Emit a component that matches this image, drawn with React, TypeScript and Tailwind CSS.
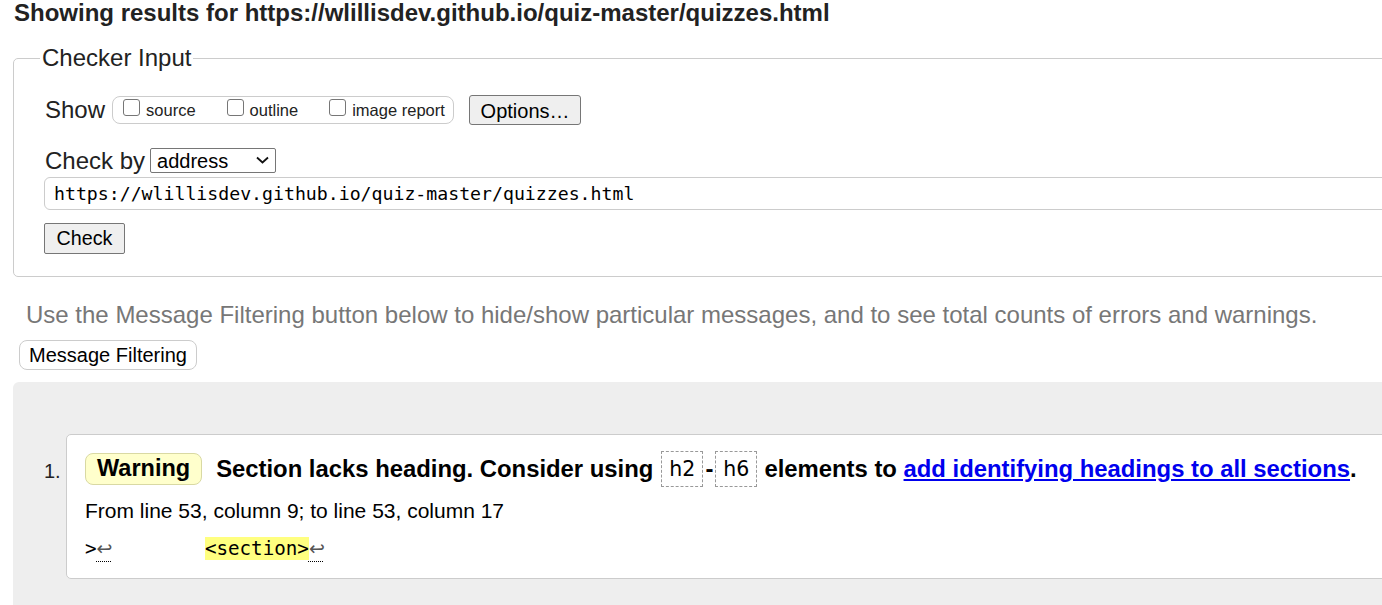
import React from "react";

const sans = "font-['Liberation_Sans',Arial,sans-serif]";
const mono = "font-['DejaVu_Sans_Mono','Liberation_Mono',monospace]";

function Box({ label }: { label: string }) {
  return (
    <label className="flex items-center">
      <span className="w-[17px] h-[17px] border border-[#767676] rounded-[3px] bg-white mr-[6px] mt-[-5px]" />
      <span className="text-[16.5px] text-[#222]">{label}</span>
    </label>
  );
}

function Ret() {
  return (
    <span className="font-['DejaVu_Sans',sans-serif] text-[19px] text-[#555] underline decoration-dotted decoration-[#000] decoration-1 underline-offset-[6px]">
      ↩
    </span>
  );
}

export default function App() {
  return (
    <div className={`w-full h-[605px] overflow-hidden bg-white text-black ${sans}`}>
      <div className="w-[1520px]">
        <h1 className="pl-[14px] -mt-[1px] text-[24px] leading-[28px] font-bold text-[#222]">
          Showing results for https://wlillisdev.github.io/quiz-master/quizzes.html
        </h1>

        <fieldset className="ml-[13px] mt-[17px] border border-[#ccc] rounded-[5px] pb-[22px]">
          <legend className="ml-[26px] px-[2px] text-[24px] leading-[28px] text-[#222]">
            Checker Input
          </legend>

          <div className="pl-[31px]">
            <div className="flex items-center mt-[23px] h-[30px]">
              <span className="text-[24px] text-[#222] mr-[7px]">Show</span>
              <div className="flex items-center h-[28px] w-[342px] border border-[#ccc] rounded-[8px] pl-[10px] gap-[31px]">
                <Box label="source" />
                <Box label="outline" />
                <Box label="image report" />
              </div>
              <button className="ml-[15px] w-[112px] h-[30px] bg-[#efefef] border border-[#767676] rounded-[3px] text-[20px] text-black">
                Options…
              </button>
            </div>

            <div className="flex items-center mt-[23px] h-[25px]">
              <span className="text-[24px] text-[#222] mr-[5px]">Check by</span>
              <div className="relative w-[126px] h-[25px] border border-[#767676] rounded-[2px] bg-white flex items-center pl-[6px]">
                <span className="text-[20px] text-black">address</span>
                <svg className="absolute right-[6px] top-[7px]" width="13" height="8" viewBox="0 0 13 8">
                  <path d="M1 1.5 L6.5 6.5 L12 1.5" fill="none" stroke="#111" strokeWidth="1.8" />
                </svg>
              </div>
            </div>

            <div className="mt-[4px] -ml-[1px] h-[33px] border border-[#ccc] rounded-[6px] flex items-center pl-[9px]">
              <span className={`${mono} text-[18.2px] text-black`}>
                https://wlillisdev.github.io/quiz-master/quizzes.html
              </span>
            </div>

            <button className="mt-[13px] -ml-[1px] w-[81px] h-[31px] bg-[#efefef] border border-[#767676] rounded-[2px] text-[19.7px] text-black block">
              Check
            </button>
          </div>
        </fieldset>

        <p className="pl-[26px] mt-[24px] text-[24px] leading-[28px] text-[#777]">
          Use the Message Filtering button below to hide/show particular messages, and to see total counts of errors and warnings.
        </p>

        <button className="ml-[19px] mt-[11px] w-[178px] h-[30px] bg-white border border-[#ccc] rounded-[8px] text-[20px] leading-[24px] text-black block">
          Message Filtering
        </button>

        <div className="ml-[13px] mt-[12px] bg-[#eeeeee] rounded-tl-[6px] pt-[52px] pl-[53px] h-[300px]">
          <div className="relative border border-[#ccc] rounded-[5px] bg-white pl-[18px] pt-[16px] h-[145px]">
            <span className="absolute left-[-23px] top-[21px] text-[20px] text-[#222]">1.</span>

            <div className="flex items-center h-[36px]">
              <span className="h-[32px] px-[11px] flex items-center bg-[#ffffcc] border border-[#d9d9a3] rounded-[8px] text-[23.5px] font-bold text-black">
                Warning
              </span>
              <span className="ml-[14px] text-[23.85px] font-bold text-black">
                Section lacks heading. Consider using
              </span>
              <code className="ml-[8px] h-[36px] px-[7px] flex items-center border border-dashed border-[#999] text-[20.5px] font-['DejaVu_Sans','Liberation_Sans',sans-serif] text-black">
                h2
              </code>
              <span className="mx-[2px] text-[23.85px] font-bold">-</span>
              <code className="h-[36px] px-[7px] flex items-center border border-dashed border-[#999] text-[20.5px] font-['DejaVu_Sans','Liberation_Sans',sans-serif] text-black">
                h6
              </code>
              <span className="ml-[7px] text-[23.85px] font-bold text-black whitespace-pre">elements to </span>
              <a href="#" className="text-[23.85px] font-bold text-[#0000ee] underline">
                add identifying headings to all sections
              </a>
              <span className="text-[23.85px] font-bold">.</span>
            </div>

            <p className="mt-[12px] text-[21px] leading-[24px] text-black">
              From line 53, column 9; to line 53, column 17
            </p>

            <div className={`mt-[14px] whitespace-pre ${mono} text-[19.2px] leading-[23px] text-black`}>
              {">"}
              <Ret />
              {"        "}
              <span className="bg-[#ffff80]">{"<section>"}</span>
              <Ret />
            </div>
          </div>
        </div>
      </div>
    </div>
  );
}
